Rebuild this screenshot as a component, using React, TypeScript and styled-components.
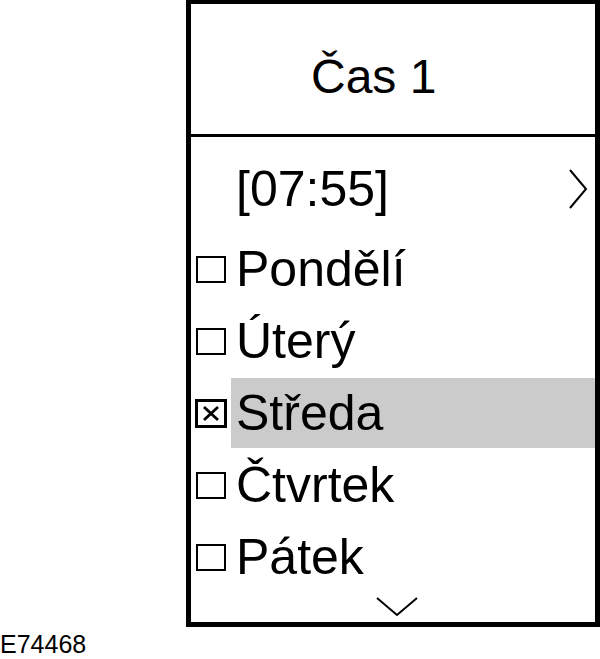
import React from "react";
import styled, { createGlobalStyle } from "styled-components";

const GlobalStyle = createGlobalStyle`
  html, body {
    margin: 0;
    padding: 0;
    background: #ffffff;
  }
  body {
    font-family: "Liberation Sans", Arial, sans-serif;
    color: #000000;
  }
`;

const Page = styled.div`
  width: 600px;
  height: 659px;
  display: flex;
  flex-direction: column;
  align-items: flex-start;
`;

const Frame = styled.div`
  box-sizing: border-box;
  margin-left: 186px;
  width: 414px;
  height: 627px;
  border-style: solid;
  border-color: #000;
  border-width: 4px 5px 5px 5px;
  display: flex;
  flex-direction: column;
`;

const Header = styled.div`
  box-sizing: border-box;
  height: 133px;
  border-bottom: 3px solid #000;
  padding: 49px 0 0 120px;
  font-size: 48px;
  line-height: 48px;
  white-space: nowrap;
`;

const List = styled.div`
  flex: 1;
  display: flex;
  flex-direction: column;
  padding-top: 16px;
`;

const TimeRow = styled.div`
  height: 72px;
  margin-bottom: 8px;
  display: flex;
  align-items: center;
  justify-content: space-between;
  padding: 0 7px 0 45px;
  font-size: 50px;
  line-height: 72px;
`;

const Row = styled.div`
  box-sizing: border-box;
  height: 72px;
  padding: 1px 0 1px 5px;
  display: flex;
  align-items: center;
`;

const CheckSlot = styled.div`
  width: 30px;
  flex-shrink: 0;
  display: flex;
  justify-content: center;
  margin-right: 5px;
`;

const Box = styled.div<{ $checked?: boolean }>`
  box-sizing: border-box;
  flex-shrink: 0;
  width: ${(p) => (p.$checked ? 32 : 30)}px;
  height: ${(p) => (p.$checked ? 29 : 27)}px;
  border: ${(p) => (p.$checked ? 3 : 2)}px solid #000;
  display: flex;
  align-items: center;
  justify-content: center;
`;

const Label = styled.div<{ $selected?: boolean }>`
  flex: 1;
  height: 70px;
  line-height: 70px;
  padding-left: 5px;
  font-size: 50px;
  white-space: nowrap;
  background: ${(p) => (p.$selected ? "#cbcbcb" : "transparent")};
`;

const Footer = styled.div`
  display: flex;
  justify-content: center;
  padding: 4px 0 0 8px;
`;

const Caption = styled.div`
  margin-top: 5px;
  font-size: 25px;
  line-height: 24px;
`;

const days = [
  { name: "Pondělí", checked: false },
  { name: "Úterý", checked: false },
  { name: "Středa", checked: true },
  { name: "Čtvrtek", checked: false },
  { name: "Pátek", checked: false },
];

const ChevronRight = () => (
  <svg width="20" height="40" viewBox="0 0 20 40" fill="none">
    <polyline points="2,1 18,20 2,39" stroke="#000" strokeWidth="2" />
  </svg>
);

const ChevronDown = () => (
  <svg width="42" height="20" viewBox="0 0 42 20" fill="none">
    <polyline points="1,1 21,18 41,1" stroke="#000" strokeWidth="2" />
  </svg>
);

const Cross = () => (
  <svg width="18" height="17" viewBox="0 0 18 17" fill="none">
    <line x1="2" y1="2" x2="16" y2="15" stroke="#000" strokeWidth="2.8" />
    <line x1="16" y1="2" x2="2" y2="15" stroke="#000" strokeWidth="2.8" />
  </svg>
);

export default function App() {
  return (
    <>
      <GlobalStyle />
      <Page>
        <Frame>
          <Header>Čas 1</Header>
          <List>
            <TimeRow>
              <span>[07:55]</span>
              <ChevronRight />
            </TimeRow>
            {days.map((d) => (
              <Row key={d.name}>
                <CheckSlot>
                  <Box $checked={d.checked}>{d.checked && <Cross />}</Box>
                </CheckSlot>
                <Label $selected={d.checked}>{d.name}</Label>
              </Row>
            ))}
            <Footer>
              <ChevronDown />
            </Footer>
          </List>
        </Frame>
        <Caption>E74468</Caption>
      </Page>
    </>
  );
}
